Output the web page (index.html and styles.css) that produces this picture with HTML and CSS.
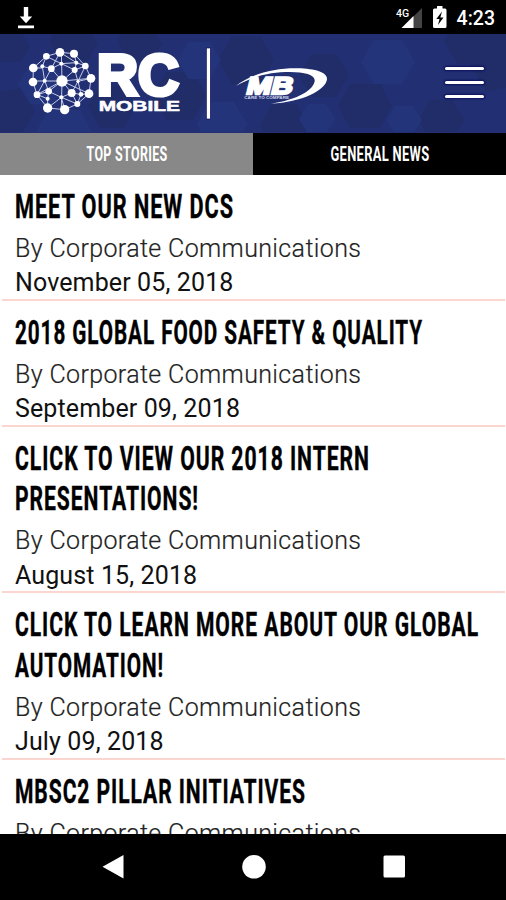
FILE: index.html
```
<!DOCTYPE html>
<html lang="en">
<head>
    <meta charset="UTF-8">
    <meta name="viewport" content="width=device-width, initial-scale=1.0">
    <title>RC Mobile</title>
    <link rel="stylesheet" href="styles.css">
</head>
<body>
    <div class="status-bar">
        <svg class="download" width="18" height="24" viewBox="0 0 18 24">
            <path d="M6.8 1h4.400v9.500h4L9 17.200 2.800 10.500h4z M1 19.500h16v2.800H1z" fill="#fff"/>
        </svg>
        <div class="status-right">
            <svg width="28" height="24" viewBox="0 0 28 24">
                <path d="M26 2v20H15V13z" fill="#444"/>
                <path d="M17.500 10v12H5.500z" fill="#fff"/>
                <text x="0" y="10.500" class="network">4G</text>
            </svg>
            <svg class="battery" width="16" height="24" viewBox="0 0 16 24">
                <path d="M5 0h5.500v2.500H13a1.500 1.500 0 0 1 1.500 1.500v16.500a1.500 1.500 0 0 1-1.500 1.500H2.500A1.500 1.500 0 0 1 1 20.500V4a1.500 1.500 0 0 1 1.500-1.500H5z" fill="#fff"/>
                <path d="M10 5.500L4.300 13h3.200l-1.500 6 5.500-7.500H8.300z" fill="#000"/>
            </svg>
            <span class="clock">4:23</span>
        </div>
    </div>
    <header>
        <svg class="pattern" width="506" height="98" viewBox="0 0 506 98">
            <g fill="#202d69">
                <path d="M0 0h22l8 12-9 16H0zM52 0h40l6 9-11 19H62L50 9zM120 0h36l6 10-11 17h-21l-12-17z"/>
                <path d="M232 2h28l14 24-14 24h-28l-14-24zM312 20h24l13 21-13 22h-24l-13-22z"/>
                <path d="M0 58l22-4 13 23-12 21H0zM100 52h24l12 20-12 22h-24L88 72zM166 38h27l14 24-14 24h-27l-14-24z"/>
                <path d="M272 70h24l13 22-3 6h-42l-4-6zM350 50h30l12 22-12 22h-30l-12-22zM448 0h58v54l-20 3-16-27h-12l-14-22z"/>
                <path d="M430 66h22l12 20-7 12h-32l-7-12z"/>
            </g>
            <g fill="#24347b">
                <path d="M30 30h24l12 20-12 20H30L18 50zM374 6h28l13 22-13 22h-28l-13-22zM395 72h18l9 14-8 12h-20l-7-12zM48 76h32l12 22H36z"/>
                <path d="M188 8h22l11 18-11 19h-22l-10-19zM308 70h18l9 15-8 13h-20l-8-13zM210 68h24l13 22-4 8h-42l-4-8z"/>
            </g>
        </svg>
        <svg class="logo" width="170" height="85" viewBox="0 0 510 255">
            <g class="links">
                <path d="M40 84L79 49L120 37L162 41L196 78L213 115L207 161L172 192L134 209L83 204L51 164L39 126z"/>
                <path d="M126 123L124 37M126 123L124 208M126 123H39M126 123L213 115M126 123L94 86M126 123L164 90M126 123L86 154M126 123L155 159M126 123L51 164M126 123L207 161"/>
                <path d="M79 49L124 71L169 68L196 78L164 90L124 71L94 86L67 79L79 49M67 79L74 122L94 86M74 122L51 164L86 154L74 122M164 90L174 124L155 159L183 163L174 124L213 115"/>
                <path d="M86 154L83 176L83 204L124 172L155 159L172 192L183 163L207 161M86 154L124 172L134 209M124 172L172 192M120 37L94 86M162 41L169 68L164 90M120 37L169 68M40 84H67M174 124L196 78M83 176L51 164"/>
            </g>
            <g fill="#fff">
                <circle cx="126" cy="123" r="17"/>
                <circle cx="120" cy="37" r="13"/><circle cx="162" cy="41" r="12"/>
                <circle cx="79" cy="49" r="10"/><circle cx="40" cy="84" r="13"/>
                <circle cx="39" cy="126" r="13"/><circle cx="51" cy="164" r="10"/>
                <circle cx="83" cy="204" r="14"/><circle cx="134" cy="209" r="14"/>
                <circle cx="172" cy="192" r="9"/><circle cx="207" cy="161" r="13"/>
                <circle cx="213" cy="115" r="13"/><circle cx="196" cy="78" r="10"/>
                <circle cx="94" cy="86" r="10"/><circle cx="164" cy="90" r="9"/>
                <circle cx="86" cy="154" r="10"/><circle cx="155" cy="159" r="12"/>
                <circle cx="67" cy="79" r="6"/><circle cx="124" cy="71" r="6"/>
                <circle cx="169" cy="68" r="6"/><circle cx="74" cy="122" r="6"/>
                <circle cx="174" cy="124" r="5"/><circle cx="83" cy="176" r="6"/>
                <circle cx="124" cy="172" r="6"/><circle cx="183" cy="163" r="7"/>
            </g>
            <text x="231" y="165" class="rc" textLength="246" lengthAdjust="spacingAndGlyphs">RC</text>
            <text x="236" y="212" class="mobile" textLength="244" lengthAdjust="spacingAndGlyphs">MOBILE</text>
        </svg>
        <svg class="logo" width="150" height="85" viewBox="0 0 450 255">
            <rect x="49" y="24" width="12" height="213" fill="#fff" stroke="#0b0f5c" stroke-width="2"/>
            <path class="swoosh" d="M138 138C178 104 250 84 322 85C378 86 412 98 411 117C409 150 335 187 243 191C305 182 368 158 374 124C377 105 345 96 300 96C240 96 190 108 138 138z"/>
            <text class="mb" transform="translate(166 161) skewX(-14)" textLength="138" lengthAdjust="spacingAndGlyphs">MB</text>
            <text class="tag" x="163" y="176" textLength="134" lengthAdjust="spacingAndGlyphs">CARE TO COMPARE</text>
        </svg>
        <button class="menu" aria-label="Menu">
            <span></span>
            <span></span>
            <span></span>
        </button>
    </header>
    <nav class="tabs">
        <a class="tab active"><svg width="82" height="24"><text x="0.500" y="18.500" textLength="81" lengthAdjust="spacingAndGlyphs">TOP STORIES</text></svg></a>
        <a class="tab"><svg width="100" height="24"><text x="0.500" y="18.500" textLength="99" lengthAdjust="spacingAndGlyphs">GENERAL NEWS</text></svg></a>
    </nav>
    <main>
        <article>
            <h2>
                <svg><text x="0" y="32" textLength="219" lengthAdjust="spacingAndGlyphs">MEET OUR NEW DCS</text></svg>
            </h2>
            <p class="author">By Corporate Communications</p>
            <p class="date">November 05, 2018</p>
        </article>
        <article>
            <h2>
                <svg><text x="0" y="32" textLength="408" lengthAdjust="spacingAndGlyphs">2018 GLOBAL FOOD SAFETY &amp; QUALITY</text></svg>
            </h2>
            <p class="author">By Corporate Communications</p>
            <p class="date">September 09, 2018</p>
        </article>
        <article>
            <h2>
                <svg><text x="0" y="32" textLength="355" lengthAdjust="spacingAndGlyphs">CLICK TO VIEW OUR 2018 INTERN</text></svg>
                <svg><text x="0" y="32" textLength="184" lengthAdjust="spacingAndGlyphs">PRESENTATIONS!</text></svg>
            </h2>
            <p class="author">By Corporate Communications</p>
            <p class="date">August 15, 2018</p>
        </article>
        <article>
            <h2>
                <svg><text x="0" y="32" textLength="464" lengthAdjust="spacingAndGlyphs">CLICK TO LEARN MORE ABOUT OUR GLOBAL</text></svg>
                <svg><text x="0" y="32" textLength="149" lengthAdjust="spacingAndGlyphs">AUTOMATION!</text></svg>
            </h2>
            <p class="author">By Corporate Communications</p>
            <p class="date">July 09, 2018</p>
        </article>
        <article>
            <h2>
                <svg><text x="0" y="32" textLength="291" lengthAdjust="spacingAndGlyphs">MBSC2 PILLAR INITIATIVES</text></svg>
            </h2>
            <p class="author">By Corporate Communications</p>
        </article>
    </main>
    <footer>
        <svg width="24" height="24" viewBox="0 0 24 24"><path d="M1.500 11.700L22.500 0v23.500z"/></svg>
        <svg width="24" height="24" viewBox="0 0 24 24"><circle cx="12" cy="11.800" r="11.800"/></svg>
        <svg width="24" height="24" viewBox="0 0 24 24"><rect x="1.500" y="0.500" width="21.500" height="22" rx="1.500"/></svg>
    </footer>
</body>
</html>
```
FILE: styles.css
```
* {
    box-sizing: border-box;
}
body {
    font-family: Roboto, sans-serif;
    margin: 0;
    height: 900px;
    display: flex;
    flex-direction: column;
    overflow: hidden;
    background-color: #fff;
}
svg {
    display: block;
    flex-shrink: 0;
    overflow: visible;
}
.status-bar {
    height: 34px;
    flex-shrink: 0;
    display: flex;
    justify-content: space-between;
    padding: 6px 11px 0 17px;
    background-color: #000;
    color: #fff;
}
.status-right {
    display: flex;
}
.battery {
    margin: 0 9px 0 8px;
}
.network {
    font: 500 10.5px Roboto, sans-serif;
    fill: #fff;
}
.clock {
    font-size: 19.5px;
    font-weight: 500;
    line-height: 25px;
}
header {
    position: relative;
    height: 98.5px;
    flex-shrink: 0;
    display: flex;
    padding: 6px 22px 0 20px;
    background-color: #223073;
}
.pattern {
    position: absolute;
    top: 0;
    left: 0;
    overflow: hidden;
}
.logo {
    position: relative;
}
.links {
    fill: none;
    stroke: #c3caea;
    stroke-width: 3;
}
.rc {
    font: bold 172px "Liberation Sans", Arial, sans-serif;
    fill: #fff;
    stroke: #fff;
    stroke-width: 12;
}
.mobile {
    font: bold 42px "Liberation Sans", Arial, sans-serif;
    fill: #fff;
    stroke: #fff;
    stroke-width: 1.5;
}
.swoosh {
    fill: #fff;
}
.mb {
    font: bold 72px "Liberation Sans", Arial, sans-serif;
    fill: #fff;
    stroke: #fff;
    stroke-width: 7;
}
.tag {
    font: bold 12px "Liberation Sans", Arial, sans-serif;
    fill: #d5d9ee;
}
.menu {
    position: relative;
    margin: 27px 0 0 auto;
    padding: 0;
    width: 39px;
    height: 32px;
    display: flex;
    flex-direction: column;
    gap: 11px;
    border: none;
    background: none;
}
.menu span {
    height: 3px;
    border-radius: 2px;
    background-color: #fff;
    box-shadow: 0 0 2px 1px #0b0f5c;
}
.tabs {
    display: flex;
    height: 42px;
    flex-shrink: 0;
}
.tab {
    flex: 1;
    display: flex;
    align-items: center;
    justify-content: center;
    background-color: #000;
}
.tab.active {
    background-color: #888;
}
.tab text {
    font: bold 19.5px Roboto, sans-serif;
    letter-spacing: 0.5px;
    fill: #fff;
}
main {
    height: 659px;
    flex-shrink: 0;
    overflow: hidden;
    padding: 0 1px 0 2px;
}
article {
    padding: 11px 0 0 13px;
    border-bottom: 2px solid #fbd6d0;
}
h2 {
    margin: 0 0 5.5px;
}
h2 svg {
    width: 480px;
    height: 40.5px;
}
h2 text {
    font: bold 33.5px Roboto, sans-serif;
    letter-spacing: 1.5px;
    fill: #000;
    stroke: #000;
    stroke-width: 0.4;
}
p {
    margin: 0;
    font-size: 25px;
    line-height: 34px;
    white-space: nowrap;
}
.author {
    height: 34.5px;
    font-weight: 300;
    letter-spacing: 0.37px;
    color: #222;
    -webkit-text-stroke: 0.2px #222;
}
.date {
    height: 32.6px;
    letter-spacing: 0.12px;
    color: #111;
}
footer {
    flex: 1;
    display: flex;
    justify-content: space-between;
    padding: 21px 100px 0 101px;
    background-color: #000;
}
footer svg {
    fill: #fff;
}
```
